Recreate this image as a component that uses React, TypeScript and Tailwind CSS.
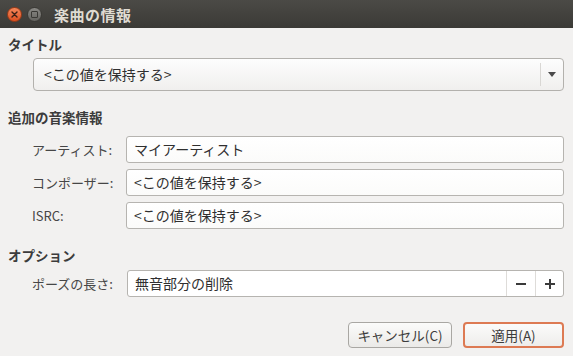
import React from "react";

const font = { fontFamily: '"Noto Sans CJK JP", "Noto Sans", sans-serif' };

function Entry({ value, className = "" }: { value: string; className?: string }) {
  return (
    <div
      className={
        "flex items-center h-[27px] rounded-[3px] border border-[#b6b4b0] bg-gradient-to-b from-[#ffffff] to-[#fbfbfa] pl-[7px] text-[14px] text-[#2f2f2f] " +
        className
      }
    >
      {value}
    </div>
  );
}

export default function App() {
  return (
    <div className="w-[573px] h-[356px] bg-[#f2f1f0] flex flex-col overflow-hidden" style={font}>
      {/* Title bar */}
      <div className="h-[28px] bg-gradient-to-b from-[#4b4a46] to-[#3b3a36] flex items-center pl-[7px] shrink-0">
        <div className="w-[15px] h-[15px] shrink-0 rounded-full bg-gradient-to-b from-[#f5875a] to-[#dd4f1e] border border-[#9c3a16] flex items-center justify-center">
          <svg width="7" height="7" viewBox="0 0 7 7">
            <path d="M1 1 L6 6 M6 1 L1 6" stroke="#3a2016" strokeWidth="1.4" strokeLinecap="round" />
          </svg>
        </div>
        <div className="ml-[5px] w-[15px] h-[15px] shrink-0 rounded-full bg-gradient-to-b from-[#8a8985] to-[#64635f] border border-[#3a3935] flex items-center justify-center">
          <div className="w-[7px] h-[7px] rounded-[1px] border-[1.5px] border-[#3a3935]" />
        </div>
        <div className="ml-[12px] text-[15px] font-bold text-[#dfdbd2] leading-none tracking-[0.5px]">楽曲の情報</div>
      </div>

      {/* Body */}
      <div className="flex flex-col pl-[8px] pr-[9px] text-[#3c3c3c]">
        <div className="mt-[6px] h-[20px] leading-[20px] text-[13.5px] font-bold">タイトル</div>
        <div className="mt-[4px] ml-[25px] h-[33px] rounded-[4px] border border-[#b3b1ad] bg-gradient-to-b from-[#fdfdfd] to-[#f0efee] flex items-center">
          <div className="flex-1 pl-[10px] text-[14px] text-[#2f2f2f]">&lt;この値を保持する&gt;</div>
          <div className="w-px h-[23px] bg-[#d9d7d4]" />
          <div className="w-[22px] flex items-center justify-center">
            <svg width="8" height="5" viewBox="0 0 8 5">
              <path d="M0 0 L8 0 L4 5 Z" fill="#4a4a4a" />
            </svg>
          </div>
        </div>

        <div className="mt-[16px] h-[20px] leading-[20px] text-[13.5px] font-bold">追加の音楽情報</div>
        <div className="mt-[9px] grid grid-cols-[94px_1fr] gap-y-[6px] pl-[24px] items-center text-[13px] text-[#464646]">
          <div>アーティスト:</div>
          <Entry value="マイアーティスト" />
          <div>コンポーザー:</div>
          <Entry value="<この値を保持する>" />
          <div>ISRC:</div>
          <Entry value="<この値を保持する>" />
        </div>

        <div className="mt-[16px] h-[20px] leading-[20px] text-[13.5px] font-bold">オプション</div>
        <div className="mt-[5px] grid grid-cols-[95px_1fr] pl-[24px] items-center text-[13px] text-[#464646]">
          <div>ポーズの長さ:</div>
          <div className="flex items-center h-[27px] rounded-[3px] border border-[#b6b4b0] bg-white text-[14px] text-[#2f2f2f]">
            <div className="flex-1 pl-[7px]">無音部分の削除</div>
            <div className="w-px h-full bg-[#dedcd9]" />
            <div className="w-[28px] flex items-center justify-center">
              <svg width="10" height="2" viewBox="0 0 10 2">
                <rect width="10" height="2" fill="#3a3a3a" />
              </svg>
            </div>
            <div className="w-px h-full bg-[#dedcd9]" />
            <div className="w-[27px] flex items-center justify-center">
              <svg width="10" height="10" viewBox="0 0 10 10">
                <rect y="4" width="10" height="2" fill="#3a3a3a" />
                <rect x="4" width="2" height="10" fill="#3a3a3a" />
              </svg>
            </div>
          </div>
        </div>

        <div className="mt-[25px] flex justify-end gap-[11px] text-[13.5px]">
          <div className="w-[104px] h-[26px] rounded-[4px] border border-[#a9a7a3] bg-gradient-to-b from-[#fbfbfa] to-[#ebeae8] flex items-center justify-center text-[#3c3c3c]">
            キャンセル(C)
          </div>
          <div className="w-[101px] h-[26px] rounded-[4px] border-2 border-[#dd7a53] bg-gradient-to-b from-[#fbfbfa] to-[#eeedeb] flex items-center justify-center text-[#3c3c3c]">
            適用(A)
          </div>
        </div>
      </div>
    </div>
  );
}
